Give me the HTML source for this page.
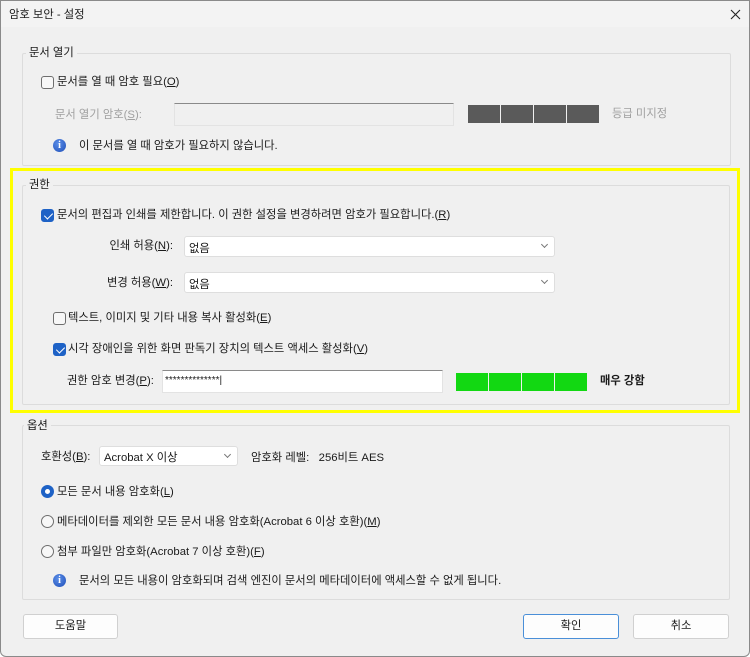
<!DOCTYPE html>
<html><head><meta charset="utf-8"><style>
*{box-sizing:border-box;margin:0;padding:0}
body{width:750px;height:657px;overflow:hidden;background:#fff;font-family:"Liberation Sans","Noto Sans CJK KR",sans-serif;font-size:11.3px;color:#1a1a1a}
.win{position:absolute;left:0;top:0;width:750px;height:657px;background:#f0f0f0;border:1px solid #8a8a8a;border-radius:0 0 6px 6px}
.title{position:absolute;left:0;top:0;width:748px;height:26px;background:#f3f3f3}
.a{position:absolute;white-space:nowrap;line-height:14px}
.grp{position:absolute;border:1px solid #dcdcdc;border-radius:2px}
.lg{position:absolute;background:#f0f0f0;padding:0 3px;line-height:14px}
.cb{position:absolute;width:13px;height:13px;border:1px solid #6e6e6e;border-radius:3px;background:#f7f7f7}
.cb.on{background:#1e62c6;border-color:#1e62c6}
.cb.on:after{content:"";position:absolute;left:3.5px;top:1px;width:4px;height:7px;border:solid #fff;border-width:0 1.3px 1.3px 0;transform:rotate(45deg)}
.rd{position:absolute;width:13px;height:13px;border:1px solid #6e6e6e;border-radius:50%;background:#f7f7f7}
.rd.on{border:4px solid #1e62c6;background:#fff}
.inp{position:absolute;background:#fff;border:1px solid #e3e3e3;border-top:1px solid #8a8a8a}
.sel{position:absolute;background:#fff;border:1px solid #dedede;border-radius:3px}
.sel span{position:absolute;left:4px;top:3px}
.sel i{position:absolute;right:7px;top:5px;width:5px;height:5px;border:solid #777;border-width:0 1px 1px 0;transform:rotate(45deg)}
.bar{position:absolute;height:18px;width:32px}
.info{position:absolute;width:13px;height:13px;border-radius:50%;background:radial-gradient(circle at 40% 35%,#5b8ee8,#1f4fb8);color:#fff;font:bold 10px "Liberation Serif",serif;text-align:center;line-height:13px}
.btn{position:absolute;height:25px;background:#fdfdfd;border:1px solid #d0d0d0;border-radius:3px;text-align:center;line-height:23px}
.g{color:#a0a0a0}
</style></head><body><div class="win">
<div class="title"></div>
<div class="a" style="left:8px;top:7px">암호 보안 - 설정</div>
<svg style="position:absolute;left:729px;top:8px" width="11" height="11"><path d="M1 1L10 10M10 1L1 10" stroke="#222" stroke-width="1.1"/></svg>

<div class="grp" style="left:21px;top:52px;width:709px;height:113px"></div>
<div class="lg" style="left:25px;top:45px">문서 열기</div>
<div class="cb" style="left:40px;top:75px"></div>
<div class="a" style="left:56px;top:74px">문서를 열 때 암호 필요(<u>O</u>)</div>
<div class="a g" style="left:54px;top:107px">문서 열기 암호(<u>S</u>):</div>
<div class="inp" style="left:173px;top:102px;width:280px;height:23px;background:#f0f0f0"></div>
<div class="bar" style="left:467px;top:104px;background:#5a5a5a"></div>
<div class="bar" style="left:500px;top:104px;background:#5a5a5a"></div>
<div class="bar" style="left:533px;top:104px;background:#5a5a5a"></div>
<div class="bar" style="left:566px;top:104px;background:#5a5a5a"></div>
<div class="a g" style="left:611px;top:106px">등급 미지정</div>
<div class="info" style="left:52px;top:138px">i</div>
<div class="a" style="left:78px;top:138px">이 문서를 열 때 암호가 필요하지 않습니다.</div>

<div style="position:absolute;left:9px;top:167px;width:730px;height:245px;border:3px solid #ffff00"></div>
<div class="grp" style="left:21px;top:184px;width:708px;height:220px"></div>
<div class="lg" style="left:25px;top:177px">권한</div>
<div class="cb on" style="left:40px;top:208px"></div>
<div class="a" style="left:56px;top:207px">문서의 편집과 인쇄를 제한합니다. 이 권한 설정을 변경하려면 암호가 필요합니다.(<u>R</u>)</div>
<div class="a" style="left:100px;top:238px;width:72px;text-align:right">인쇄 허용(<u>N</u>):</div>
<div class="sel" style="left:183px;top:235px;width:371px;height:21px"><span>없음</span><i></i></div>
<div class="a" style="left:90px;top:275px;width:82px;text-align:right">변경 허용(<u>W</u>):</div>
<div class="sel" style="left:183px;top:271px;width:371px;height:21px"><span>없음</span><i></i></div>
<div class="cb" style="left:52px;top:311px"></div>
<div class="a" style="left:67px;top:310px">텍스트, 이미지 및 기타 내용 복사 활성화(<u>E</u>)</div>
<div class="cb on" style="left:52px;top:342px"></div>
<div class="a" style="left:67px;top:341px">시각 장애인을 위한 화면 판독기 장치의 텍스트 액세스 활성화(<u>V</u>)</div>
<div class="a" style="left:66px;top:373px">권한 암호 변경(<u>P</u>):</div>
<div class="inp" style="left:161px;top:369px;width:281px;height:23px"><span class="a" style="left:2px;top:3px;font-size:10px">**************|</span></div>
<div class="bar" style="left:455px;top:372px;background:#12d812"></div>
<div class="bar" style="left:488px;top:372px;background:#12d812"></div>
<div class="bar" style="left:521px;top:372px;background:#12d812"></div>
<div class="bar" style="left:554px;top:372px;background:#12d812"></div>
<div class="a" style="left:599px;top:373px;font-weight:bold">매우 강함</div>

<div class="grp" style="left:21px;top:424px;width:708px;height:175px"></div>
<div class="lg" style="left:23px;top:418px">옵션</div>
<div class="a" style="left:40px;top:449px">호환성(<u>B</u>):</div>
<div class="sel" style="left:98px;top:445px;width:139px;height:20px"><span style="top:2px">Acrobat X 이상</span><i></i></div>
<div class="a" style="left:250px;top:450px">암호화 레벨:&nbsp;&nbsp;&nbsp;256비트 AES</div>
<div class="rd on" style="left:40px;top:484px"></div>
<div class="a" style="left:56px;top:484px">모든 문서 내용 암호화(<u>L</u>)</div>
<div class="rd" style="left:40px;top:514px"></div>
<div class="a" style="left:56px;top:514px">메타데이터를 제외한 모든 문서 내용 암호화(Acrobat 6 이상 호환)(<u>M</u>)</div>
<div class="rd" style="left:40px;top:544px"></div>
<div class="a" style="left:56px;top:544px">첨부 파일만 암호화(Acrobat 7 이상 호환)(<u>F</u>)</div>
<div class="info" style="left:52px;top:573px">i</div>
<div class="a" style="left:78px;top:573px">문서의 모든 내용이 암호화되며 검색 엔진이 문서의 메타데이터에 액세스할 수 없게 됩니다.</div>

<div class="btn" style="left:22px;top:613px;width:95px">도움말</div>
<div class="btn" style="left:522px;top:613px;width:96px;border-color:#4a8fd8">확인</div>
<div class="btn" style="left:632px;top:613px;width:96px">취소</div>
</div></body></html>
